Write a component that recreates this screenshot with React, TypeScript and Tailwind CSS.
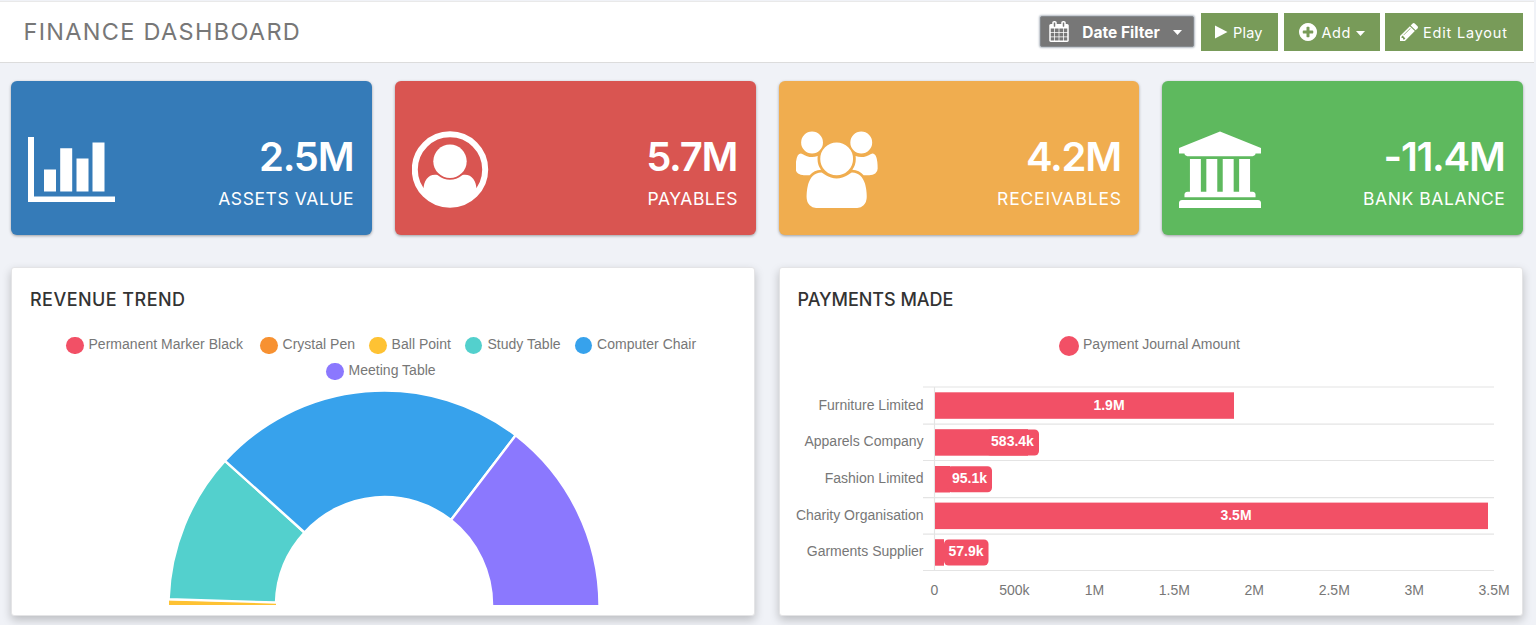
import React from "react";

const BarChartIcon = () => (
  <svg className="h-[66px] w-[87px]" viewBox="0 0 87 66" fill="#fff">
    <path d="M0 0h6v59.500h81v5.500H0z" />
    <path d="M16 32.500h12v22H16zM32.200 11.200h12v43.300h-12zM48.500 21.500h12v33h-12zM64.500 5.500h12v49h-12z" />
  </svg>
);

const UserIcon = () => (
  <svg className="h-[77px] w-[77px]" viewBox="0 0 77 77" fill="#fff">
    <defs>
      <clipPath id="face">
        <circle cx="38" cy="38.500" r="37" />
      </clipPath>
    </defs>
    <circle cx="38" cy="38.500" r="35.200" fill="none" stroke="#fff" strokeWidth="6" />
    <circle cx="38" cy="30.300" r="16.700" />
    <path
      clipPath="url(#face)"
      d="M11.500 59C11.500 50 16 43.800 23 43.800C25 43.800 25.800 44.200 26.500 44.800A18.500 18.500 0 0 0 49.500 44.800C50.200 44.200 51 43.800 53 43.800C60 43.800 64.500 50 64.500 59L70 77H7z"
    />
  </svg>
);

const UsersIcon = () => (
  <svg className="h-[77px] w-[82px]" viewBox="8 -8 1920 1792" fill="#fff">
    <path d="M593 896q-162 5-265 128h-134q-82 0-138-40.500t-56-118.500q0-353 124-353 6 0 43.500 21t97.500 42.500 119 21.500q67 0 133-23-5 37-5 66 0 139 81 256zm1071 637q0 120-73 189.500t-194 69.500h-874q-121 0-194-69.500t-73-189.500q0-53 3.500-103.500t14-109 26.500-108.500 43-97.500 62-81 85.500-53.500 111.500-20q10 0 43 21.500t73 48 107 48 135 21.500 135-21.500 107-48 73-48 43-21.500q61 0 111.500 20t85.500 53.500 62 81 43 97.500 26.500 108.500 14 109 3.500 103.500zm-1024-1277q0 106-75 181t-181 75-181-75-75-181 75-181 181-75 181 75 75 181zm704 384q0 159-112.500 271.500t-271.500 112.500-271.500-112.500-112.500-271.500 112.500-271.500 271.500-112.500 271.500 112.500 112.500 271.500zm576 225q0 78-56 118.500t-138 40.500h-134q-103-123-265-128 81-117 81-256 0-29-5-66 66 23 133 23 59 0 119-21.500t97.500-42.500 43.500-21q124 0 124 353zm-128-609q0 106-75 181t-181 75-181-75-75-181 75-181 181-75 181 75 75 181z" />
  </svg>
);

const BankIcon = () => (
  <svg className="h-[77px] w-[82px]" viewBox="0 -8 1920 1792" fill="#fff">
    <path d="M960 0l960 384v128h-128q0 26-20.500 45t-48.500 19h-1526q-28 0-48.500-19t-20.500-45h-128v-128zm-704 640h256v768h128v-768h256v768h128v-768h256v768h128v-768h256v768h59q28 0 48.500 19t20.500 45v64h-1664v-64q0-26 20.500-45t48.500-19h59v-768zm1595 960q28 0 48.500 19t20.500 45v128h-1920v-128q0-26 20.500-45t48.500-19h1782z" />
  </svg>
);

const CalendarIcon = () => (
  <svg className="h-[21px] w-[20px]" viewBox="64 0 1664 1792" fill="#fff">
    <path d="M192 1664h288v-288h-288v288zm352 0h320v-288h-320v288zm-352-352h288v-320h-288v320zm352 0h320v-320h-320v320zm-352-384h288v-288h-288v288zm736 736h320v-288h-320v288zm-384-736h320v-288h-320v288zm768 736h288v-288h-288v288zm-384-352h320v-320h-320v320zm-352-864v-288q0-13-9.500-22.500t-22.500-9.500h-64q-13 0-22.500 9.500t-9.500 22.500v288q0 13 9.500 22.500t22.500 9.500h64q13 0 22.500-9.500t9.500-22.500zm736 864h288v-320h-288v320zm-384-384h320v-288h-320v288zm384 0h288v-288h-288v288zm32-480v-288q0-13-9.500-22.500t-22.500-9.500h-64q-13 0-22.500 9.500t-9.500 22.500v288q0 13 9.500 22.500t22.500 9.500h64q13 0 22.500-9.500t9.500-22.500zm384-64v1280q0 52-38 90t-90 38h-1408q-52 0-90-38t-38-90v-1280q0-52 38-90t90-38h128v-96q0-66 47-113t113-47h64q66 0 113 47t47 113v96h384v-96q0-66 47-113t113-47h64q66 0 113 47t47 113v96h128q52 0 90 38t38 90z" />
  </svg>
);

const PlusIcon = () => (
  <svg className="h-[18px] w-[18px]" viewBox="128 128 1536 1536" fill="#fff">
    <path d="M1344 960v-128q0-26-19-45t-45-19h-256v-256q0-26-19-45t-45-19h-128q-26 0-45 19t-19 45v256h-256q-26 0-45 19t-19 45v128q0 26 19 45t45 19h256v256q0 26 19 45t45 19h128q26 0 45-19t19-45v-256h256q26 0 45-19t19-45zm320-64q0 209-103 385.500t-279.500 279.500-385.500 103-385.500-103-279.500-279.500-103-385.500 103-385.500 279.500-279.500 385.500-103 385.500 103 279.500 279.500 103 385.500z" />
  </svg>
);

const PencilIcon = () => (
  <svg className="h-[18px] w-[18px]" viewBox="128 149 1515 1515" fill="#fff">
    <path d="M491 1536l91-91-235-235-91 91v107h128v128h107zm523-928q0-22-22-22-10 0-17 7l-542 542q-7 7-7 17 0 22 22 22 10 0 17-7l542-542q7-7 7-17zm-54-192l416 416-832 832h-416v-416zm683 96q0 53-37 90l-166 166-416-416 166-165q36-38 90-38 53 0 91 38l235 234q37 39 37 91z" />
  </svg>
);

const Caret = () => (
  <svg className="mt-[2px] h-[5px] w-[9px]" viewBox="0 0 9 5" fill="#fff">
    <path d="M0 0h9L4.500 5z" />
  </svg>
);

const stats = [
  { value: "2.5M", label: "ASSETS VALUE", color: "bg-[#357bb8]", icon: <BarChartIcon />, pad: "pt-[56px]", track: "tracking-[0.6px]" },
  { value: "5.7M", label: "PAYABLES", color: "bg-[#d95551]", icon: <UserIcon />, pad: "pt-[50px]", track: "tracking-[0.5px]" },
  { value: "4.2M", label: "RECEIVABLES", color: "bg-[#f0ad4f]", icon: <UsersIcon />, pad: "pt-[50px]", track: "tracking-[0.8px]" },
  { value: "-11.4M", label: "BANK BALANCE", color: "bg-[#5eb95e]", icon: <BankIcon />, pad: "pt-[50px]", track: "tracking-[0.6px]" },
];

const legend = [
  { name: "Permanent Marker Black", color: "bg-[#f25066]", gap: "mr-[17px]" },
  { name: "Crystal Pen", color: "bg-[#f79131]", gap: "mr-[14px]" },
  { name: "Ball Point", color: "bg-[#fec233]", gap: "mr-[14px]" },
  { name: "Study Table", color: "bg-[#53d0cd]", gap: "mr-[14px]" },
  { name: "Computer Chair", color: "bg-[#37a2ec]", gap: "" },
];

const LegendItem = ({ name, color, gap }: { name: string; color: string; gap: string }) => (
  <div className={`flex h-[18px] items-center ${gap}`}>
    <span className={`mt-px mr-[5px] h-[17.5px] w-[17.5px] rounded-full ${color}`} />
    <span className="-mt-[2px] leading-[18px] tracking-[0.02px] whitespace-nowrap">{name}</span>
  </div>
);

const rows = [
  { name: "Furniture Limited", y: 392.3, base: 410, end: 1234, text: "1.9M", tx: 1109, box: 0, boxEnd: 0 },
  { name: "Apparels Company", y: 429.2, base: 446.3, end: 1028, text: "583.4k", tx: 1012.5, box: 986, boxEnd: 1039 },
  { name: "Fashion Limited", y: 466, base: 483.3, end: 950, text: "95.1k", tx: 969.5, box: 947, boxEnd: 992 },
  { name: "Charity Organisation", y: 502.6, base: 520, end: 1488, text: "3.5M", tx: 1236, box: 0, boxEnd: 0 },
  { name: "Garments Supplier", y: 539.2, base: 556.3, end: 944, text: "57.9k", tx: 966, box: 944, boxEnd: 988.5 },
];
const gridY = [387, 424.2, 460.5, 497.7, 534.2, 570.5];
const ticks = ["0", "500k", "1M", "1.5M", "2M", "2.5M", "3M", "3.5M"];

const panel =
  "h-[349px] overflow-hidden rounded-[3px] border border-[#e4e4e6] bg-white shadow-[0_4px_10px_rgba(0,0,0,0.22)]";

export default function App() {
  return (
    <div className="flex h-[625px] w-[1536px] flex-col overflow-hidden bg-[#f0f2f7] font-[Inter,sans-serif]">
      <header className="mt-px mr-[2px] flex h-[62px] shrink-0 items-start justify-between border-t border-b-[1.5px] border-t-[#e9e9e9] border-b-[#dcdcdc] bg-white pr-[11px] pl-[23.5px]">
        <h1 className="mt-[14px] text-[23.5px] leading-[32px] tracking-[1.3px] text-[#777]">FINANCE DASHBOARD</h1>
        <div className="flex items-start text-[14.5px] text-white">
          <button className="mt-[14px] mr-[7px] flex h-[31px] w-[154px] items-center rounded-[2px] border border-[#85898d] bg-[#777] pl-[8px] text-[15.5px] font-bold shadow-[0_0_2px_1px_#b5bcc4]">
            <CalendarIcon />
            <span className="mt-[2px] ml-[12px] w-[80px] whitespace-nowrap">Date Filter</span>
            <span className="ml-[12px]"><Caret /></span>
          </button>
          <button className="mt-[11px] mr-[5.5px] flex h-[38px] w-[77px] items-center bg-[#789b59] pl-[14px]">
            <svg className="mr-[5px] h-[14px] w-[13px]" viewBox="0 0 13 14" fill="#fff"><path d="M0 .5L12.500 7L0 13.500z" /></svg>
            <span className="mt-px tracking-[0.2px]">Play</span>
          </button>
          <button className="mt-[11px] mr-[5.5px] flex h-[38px] w-[96px] items-center bg-[#789b59] pl-[15px]">
            <PlusIcon />
            <span className="mt-px mr-[5px] ml-[5px] tracking-[0.5px]">Add</span>
            <Caret />
          </button>
          <button className="mt-[11px] flex h-[38px] w-[138px] items-center bg-[#789b59] pl-[15px] whitespace-nowrap">
            <PencilIcon />
            <span className="mt-px ml-[5px] tracking-[0.8px]">Edit Layout</span>
          </button>
        </div>
      </header>

      <main className="flex flex-col px-[11px] pt-[18px]">
        <section className="mr-[2px] grid grid-cols-4 gap-[23px]">
          {stats.map((s) => (
            <div key={s.label} className={`flex h-[154px] justify-between rounded-[6px] pr-[17.5px] pl-[17px] text-white shadow-[0_1px_3px_rgba(0,0,0,0.35)] ${s.color}`}>
              <div className={s.pad}>{s.icon}</div>
              <div className="flex flex-col items-end pt-[52px]">
                <div className="mr-[1px] text-[40px] leading-[48px] font-semibold tracking-[-1.3px]">{s.value}</div>
                <div className={`mt-[7px] text-[17.5px] leading-[22px] ${s.track}`}>{s.label}</div>
              </div>
            </div>
          ))}
        </section>

        <section className="mt-[32px] mr-[2px] grid grid-cols-2 gap-[24px]">
          <div className={panel}>
            <h2 className="mt-[20px] ml-[18px] text-[18px] leading-[24px] font-medium tracking-[0.45px] text-[#333]">REVENUE TREND</h2>
            <div className="font-['Liberation_Sans',Arial,sans-serif] text-[14px] text-[#777]">
              <div className="mt-[24px] ml-[54px] flex">
                {legend.map((l) => <LegendItem key={l.name} {...l} />)}
              </div>
              <div className="mt-[8px] ml-[314px] flex">
                <LegendItem name="Meeting Table" color="bg-[#8b78fe]" gap="" />
              </div>
            </div>
            <svg className="mt-[10px] ml-[157px] block h-[215px] w-[431px]" viewBox="169 390 431 215">
              <g stroke="#fff" strokeWidth="2.400" strokeLinejoin="round">
                <path fill="#fec233" d="M168.500 620V600.300L276 602.800V620z" stroke="none" />
                <path fill="#53d0cd" d="M168.600 599.300A215.500 215.500 0 0 1 225 460.800L304.500 532.500A108 108 0 0 0 276 602.500z" />
                <path fill="#37a2ec" d="M225 460.800A215.500 215.500 0 0 1 515.700 435.300L451 520A108 108 0 0 0 304.500 532.500z" />
                <path fill="#8b78fe" d="M515.700 435.300A215.500 215.500 0 0 1 599.500 607H492A108 108 0 0 0 451 520z" />
              </g>
            </svg>
          </div>

          <div className={panel}>
            <h2 className="mt-[20px] ml-[17.500px] text-[18px] leading-[24px] font-medium tracking-[-0.03px] text-[#333]">PAYMENTS MADE</h2>
            <div className="mt-[23px] ml-[279px] flex h-[20px] items-center font-['Liberation_Sans',Arial,sans-serif] text-[14px] text-[#777]">
              <span className="mt-px mr-[4px] h-[20px] w-[20px] rounded-full bg-[#f25066]" />
              <span className="-mt-[2px] leading-[18px] tracking-[0.02px]">Payment Journal Amount</span>
            </div>
            <svg
              className="mt-[25px] block h-[225px] w-[742px] font-['Liberation_Sans',Arial,sans-serif] text-[14px]"
              viewBox="780 380 742 225"
            >
              <g stroke="#e4e4e4" strokeWidth="1.200">
                {gridY.map((y) => <line key={y} x1="923" x2="1494" y1={y} y2={y} />)}
                <line x1="934.500" x2="934.500" y1="387" y2="571" />
              </g>
              {rows.map((r) => (
                <g key={r.name}>
                  <rect x="935" y={r.y} width={r.end - 935} height="26.500" fill="#f25066" />
                  {r.box > 0 && <rect x={r.box} y={r.y + 0.3} width={r.boxEnd - r.box} height="26" rx="4.500" fill="#f25066" />}
                  <text x="923.500" y={r.base} textAnchor="end" fill="#777">{r.name}</text>
                  <text x={r.tx} y={r.base} textAnchor="middle" fill="#fff" fontWeight="bold">{r.text}</text>
                </g>
              ))}
              {ticks.map((t, i) => (
                <text key={t} x={934.5 + i * 79.95} y="595" textAnchor="middle" fill="#777">{t}</text>
              ))}
            </svg>
          </div>
        </section>
      </main>
    </div>
  );
}
